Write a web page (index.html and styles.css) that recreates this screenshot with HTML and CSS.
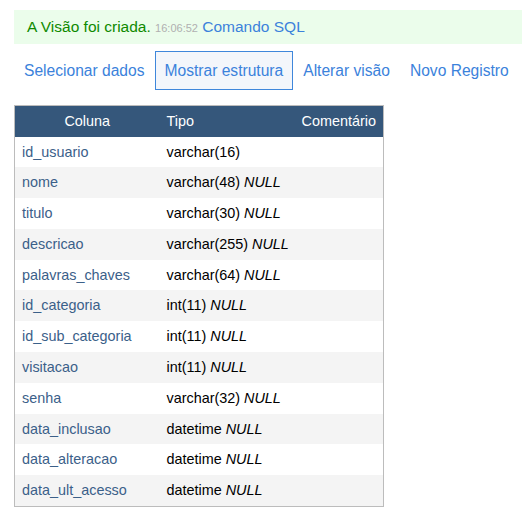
FILE: index.html
```html
<!DOCTYPE html>
<html>
<head>
<meta charset="utf-8">
<link rel="stylesheet" href="styles.css">
</head>
<body>
<div class="page">
  <p class="message">A Visão foi criada. <span class="time">16:06:52</span> <a href="#" class="link">Comando SQL</a></p>
  <nav class="tabs">
    <a href="#" class="tab">Selecionar dados</a>
    <a href="#" class="tab active">Mostrar estrutura</a>
    <a href="#" class="tab">Alterar visão</a>
    <a href="#" class="tab">Novo Registro</a>
  </nav>
  <table class="structure">
    <thead>
      <tr><th class="c-name">Coluna</th><th class="c-type">Tipo</th><th class="c-comment">Comentário</th></tr>
    </thead>
    <tbody>
      <tr><td class="name">id_usuario</td><td>varchar(16)</td><td></td></tr>
      <tr><td class="name">nome</td><td>varchar(48) <i>NULL</i></td><td></td></tr>
      <tr><td class="name">titulo</td><td>varchar(30) <i>NULL</i></td><td></td></tr>
      <tr><td class="name">descricao</td><td>varchar(255) <i>NULL</i></td><td></td></tr>
      <tr><td class="name">palavras_chaves</td><td>varchar(64) <i>NULL</i></td><td></td></tr>
      <tr><td class="name">id_categoria</td><td>int(11) <i>NULL</i></td><td></td></tr>
      <tr><td class="name">id_sub_categoria</td><td>int(11) <i>NULL</i></td><td></td></tr>
      <tr><td class="name">visitacao</td><td>int(11) <i>NULL</i></td><td></td></tr>
      <tr><td class="name">senha</td><td>varchar(32) <i>NULL</i></td><td></td></tr>
      <tr><td class="name">data_inclusao</td><td>datetime <i>NULL</i></td><td></td></tr>
      <tr><td class="name">data_alteracao</td><td>datetime <i>NULL</i></td><td></td></tr>
      <tr><td class="name">data_ult_acesso</td><td>datetime <i>NULL</i></td><td></td></tr>
    </tbody>
  </table>
</div>
</body>
</html>
```
FILE: styles.css
```css
html, body {
  margin: 0;
  padding: 0;
  background: #fff;
}
body {
  font-family: "Liberation Sans", Arial, sans-serif;
  font-size: 14px;
  color: #000;
}
.page {
  padding: 10px 0 0 14px;
}
.message {
  margin: 0;
  height: 34px;
  line-height: 34px;
  padding-left: 13px;
  background: #ebfdeb;
  color: #0f8a00;
  font-size: 15.5px;
  white-space: nowrap;
}
.time {
  color: #b0b0b0;
  font-size: 11px;
}
.link {
  color: #3b82db;
  text-decoration: none;
}
.tabs {
  display: flex;
  margin-top: 7px;
  height: 39px;
}
.tab {
  display: flex;
  align-items: center;
  padding: 0 10px;
  font-size: 15.6px;
  color: #3b82db;
  text-decoration: none;
  white-space: nowrap;
}
.tab.active {
  padding: 0 9px;
  border: 1px solid #3f87db;
  background: #f3f6fb;
}
.structure {
  margin-top: 15px;
  border-collapse: collapse;
  border: 1px solid #bcbcbc;
  width: 370px;
  table-layout: fixed;
  font-size: 14.4px;
}
.structure th {
  background: #35577b;
  color: #fff;
  font-weight: normal;
  height: 31px;
  padding: 0 7px;
  box-sizing: border-box;
}
.c-name { width: 145px; text-align: center; }
.c-type { width: 135px; text-align: left; }
.c-comment { text-align: right; }
.structure td {
  padding: 7px;
  line-height: 16.8px;
  white-space: nowrap;
}
.structure tbody tr:nth-child(even) td {
  background: #f4f4f4;
}
.name {
  color: #3b6089;
}
```
